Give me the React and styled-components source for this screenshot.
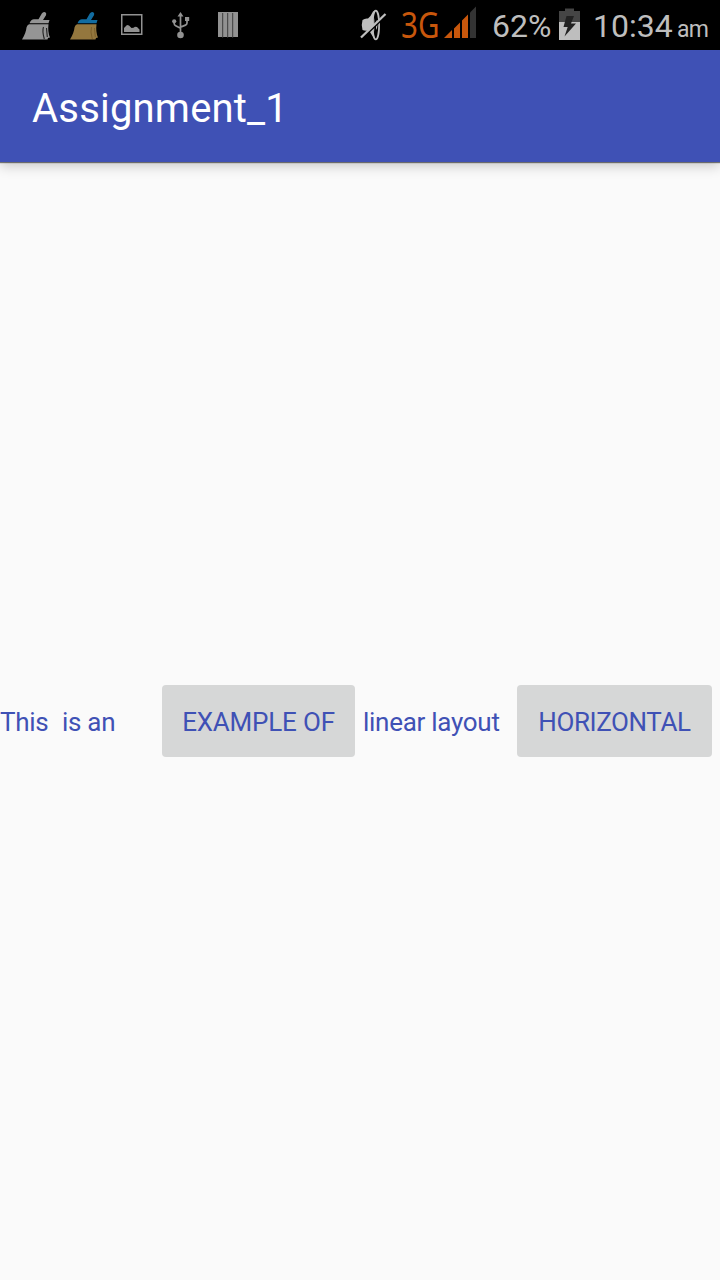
import React from "react";
import styled, { createGlobalStyle } from "styled-components";

const GlobalStyle = createGlobalStyle`
  body { margin: 0; background: #fafafa; font-family: Roboto, sans-serif; }
  *, *::before, *::after { box-sizing: border-box; }
`;

const Screen = styled.div`
  display: flex;
  flex-direction: column;
  width: 720px;
  height: 1280px;
  overflow: hidden;
  background: #fafafa;
`;

const StatusBar = styled.header`
  display: flex;
  justify-content: space-between;
  flex: none;
  height: 50px;
  padding: 0 12px 0 20px;
  background: #000;
  color: #bebebe;
`;

const Notifications = styled.div`
  display: flex;
  gap: 16px;
`;

const SystemStatus = styled.div`
  display: flex;
  align-items: center;
  height: 50px;
`;

const Icon = styled.svg`
  display: block;
  flex: none;
  width: ${(p) => p.$width}px;
  height: 50px;
  margin-right: ${(p) => p.$gap || 0}px;
`;

const Network = styled.span`
  flex: none;
  width: 43px;
  color: #c8570c;
  font: 36px/46px "Noto Sans", sans-serif;
  transform: scaleX(0.82);
  transform-origin: left;
  white-space: nowrap;
`;

const StatusText = styled.span`
  flex: none;
  width: ${(p) => p.$width}px;
  padding-left: ${(p) => p.$inset || 0}px;
  padding-top: 2px;
  font-size: 32px;
  line-height: 50px;
  white-space: nowrap;
`;

const Meridiem = styled.span`
  flex: none;
  width: 31px;
  padding-top: 10px;
  font-size: 23px;
  line-height: 46px;
  letter-spacing: -0.7px;
  white-space: nowrap;
`;

const AppBar = styled.div`
  display: flex;
  align-items: center;
  flex: none;
  height: 112px;
  padding: 4px 32px 0;
  background: #3f51b5;
  box-shadow: 0 1px 1px rgba(0, 0, 0, 0.5), 0 4px 12px rgba(0, 0, 0, 0.2);
`;

const Title = styled.h1`
  margin: 0;
  color: #fff;
  font-size: 40px;
  font-weight: 400;
  letter-spacing: 0.2px;
`;

const LinearLayout = styled.main`
  display: flex;
  align-items: center;
  flex: 1;
`;

const Label = styled.span`
  flex: none;
  width: ${(p) => p.$width}px;
  padding-left: ${(p) => p.$inset || 0}px;
  padding-top: 2px;
  color: #3f51b5;
  font-size: 26px;
  line-height: 32px;
  letter-spacing: -0.28px;
  white-space: pre;
`;

const Button = styled.button`
  flex: none;
  width: ${(p) => p.$width}px;
  height: 72px;
  margin: 0 4px;
  padding: 2px 0 0;
  border: 0;
  border-radius: 4px;
  background: #d6d7d7;
  color: #3f51b5;
  font: 26px/32px Roboto, sans-serif;
  letter-spacing: ${(p) => p.$spacing || 0}px;
  text-transform: uppercase;
  white-space: nowrap;
`;

function Broom({ handle, bristle, strands, strandWidth }) {
  return (
    <Icon $width={32} viewBox="0 0 32 50">
      <path d="M21.800 13.500q1.500-2.300 3.500-1.200 1.500 1.200.7 3L23 20h6.500l-1 3.200H9.500Q11 19.300 14 19.300h4.500z" fill={handle} />
      <path d="M9 24.300h19.500Q27.500 32 30 37.500l-2 .5-.5 1.500H2Q6 33 6.500 27.500 7 25 9 24.300z" fill={bristle} />
      <path d="M23.500 27q-1.500 4 .8 12M26.500 28l.8 9" stroke={strands} strokeWidth={strandWidth} fill="none" />
    </Icon>
  );
}

function PictureIcon() {
  return (
    <Icon $width={32} viewBox="-5 0 32 50">
      <rect x="0.750" y="14.750" width="20" height="19.500" fill="none" stroke="#929292" strokeWidth="1.500" />
      <path d="M3 32v-4l3-3 2 .5 2.500 2.500 2-.2 1.500-1 2 .2 2.500 2.500V32z" fill="#929292" />
    </Icon>
  );
}

function UsbIcon() {
  return (
    <Icon $width={32} viewBox="-6 0 32 50">
      <g fill="none" stroke="#929292" strokeWidth="1.700">
        <path d="M10.500 15v20M4.200 21v2.500q0 1.500 1.500 2.300l4.800 2.500M17 20v3q0 1.500-1.500 2.100l-5 2" />
      </g>
      <path d="M10.500 12l3 4.500h-6zM15 17h4.200v4H15z" fill="#929292" />
      <circle cx="4.200" cy="21.300" r="2.100" fill="#929292" />
      <circle cx="10.500" cy="35" r="3.300" fill="#929292" />
    </Icon>
  );
}

function BarsIcon() {
  return (
    <Icon $width={32} viewBox="-6 0 32 50">
      <path d="M0 12h20v25H0z" fill="#929292" />
      <path d="M4.700 13v25M9.700 13v25M14.700 13v25" stroke="#333" strokeWidth="0.900" />
    </Icon>
  );
}

function MuteIcon() {
  return (
    <Icon $width={28} $gap={13} viewBox="0 0 28 50">
      <path d="M2.500 20Q5 18 8 18.500q3-2.500 5-7l3-1.500-1 29.500Q11 34 9 30.500q-4 .8-6.500-.5-1.500-5 0-10z" fill="#bebebe" />
      <ellipse cx="15.800" cy="25" rx="3.300" ry="14.300" fill="#000" stroke="#bebebe" strokeWidth="1.700" />
      <path d="M13.500 14.500q2 10 0 21-1-10 0-21zM16 20q3 5 0 10z" fill="#bebebe" />
      <path d="M2 38.500L26.500 15" stroke="#000" strokeWidth="2" />
      <path d="M1 37.500L25.500 14" stroke="#bebebe" strokeWidth="2.300" />
    </Icon>
  );
}

function SignalIcon() {
  return (
    <Icon $width={34} $gap={13} viewBox="0 0 34 50">
      <path d="M0 38l8-8v8zM10 38V28.500l6-6V38zM18 38V20.500l6-6V38z" fill="#c8570c" />
      <path d="M26 38V12.500l6-6V38z" fill="#333" />
    </Icon>
  );
}

function BatteryIcon() {
  return (
    <Icon $width={22} $gap={12} viewBox="0 0 22 50">
      <path d="M6 11V8.500h9V11h6v11H0V11z" fill="#454545" />
      <path d="M0 22h21v18H0z" fill="#bebebe" />
      <path d="M7.500 16H15l-3 7.500h5L5.500 36.500l3.200-9.500H4.500z" fill="#222" />
    </Icon>
  );
}

export default function App() {
  return (
    <>
      <GlobalStyle />
      <Screen>
        <StatusBar>
          <Notifications>
            <Broom handle="#959595" bristle="#959595" strands="#222" strandWidth={1.1} />
            <Broom handle="#126ca0" bristle="#94773e" strands="#715522" strandWidth={0.7} />
            <PictureIcon />
            <UsbIcon />
            <BarsIcon />
          </Notifications>
          <SystemStatus>
            <MuteIcon />
            <Network>3G</Network>
            <SignalIcon />
            <StatusText $width={68} $inset={1}>62%</StatusText>
            <BatteryIcon />
            <StatusText $width={84}>10:34</StatusText>
            <Meridiem>am</Meridiem>
          </SystemStatus>
        </StatusBar>
        <AppBar>
          <Title>Assignment_1</Title>
        </AppBar>
        <LinearLayout>
          <Label $width={62}>This</Label>
          <Label $width={96}>is an</Label>
          <Button $width={193} $spacing={-0.2}>Example of</Button>
          <Label $width={154} $inset={4}>linear layout</Label>
          <Button $width={195} $spacing={-0.4}>Horizontal</Button>
        </LinearLayout>
      </Screen>
    </>
  );
}
